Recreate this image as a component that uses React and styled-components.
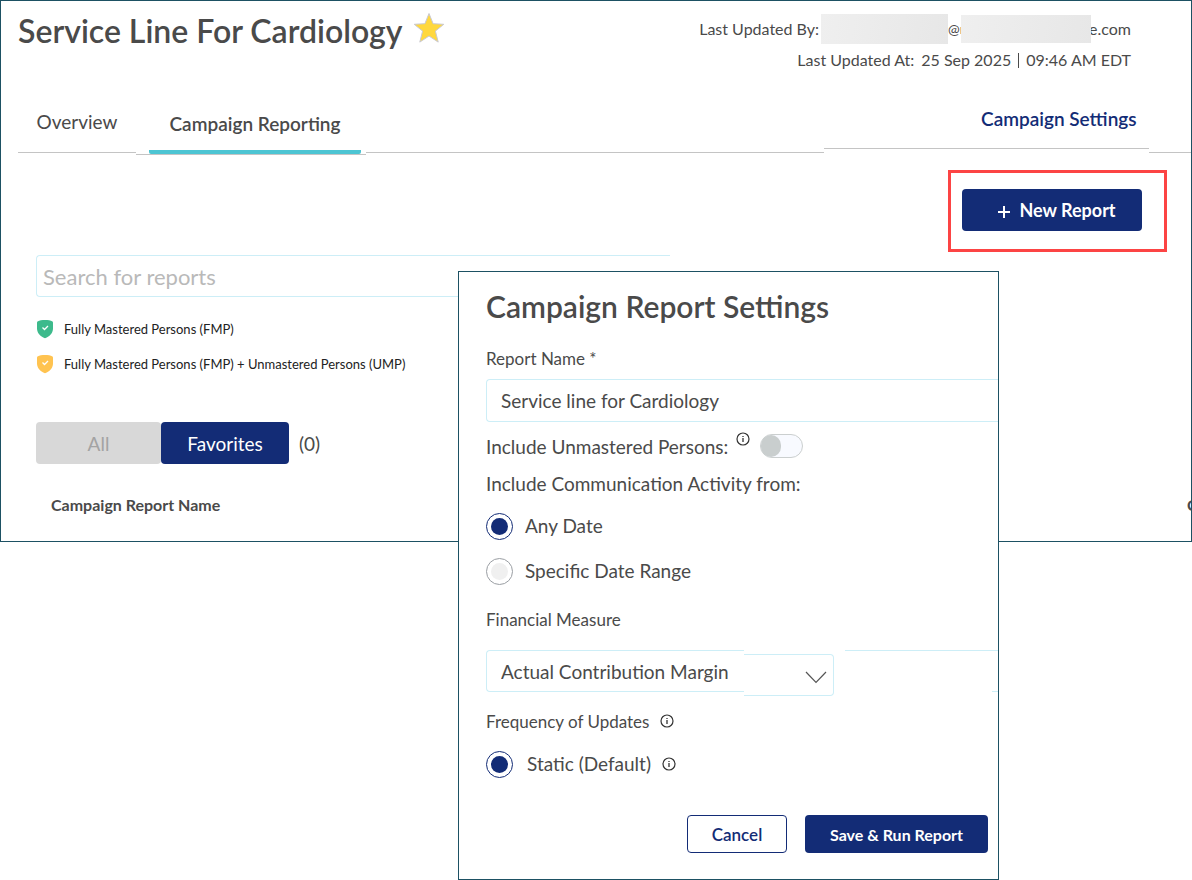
import { useState } from 'react'
import styled, { createGlobalStyle } from 'styled-components'

const navy = '#132c76'
const ink = '#4a4a4a'
const frame = '#1d5163'
const line = '#c4c4c4'
const field = '#cdeef7'

const GlobalStyle = createGlobalStyle`
  * {
    margin: 0;
    padding: 0;
    box-sizing: border-box;
  }

  body {
    background: #fff;
    color: ${ink};
    font-family: Lato, 'Liberation Sans', sans-serif;
    font-size: 16px;
  }

  button, input, select {
    font-family: inherit;
    color: inherit;
  }
`

const Page = styled.div`
  display: grid;
  grid-template-columns: minmax(0, 1fr);
  align-items: start;
`

const Panel = styled.main`
  grid-area: 1 / 1;
  border: 1px solid ${frame};
  padding-bottom: 22px;
  overflow: hidden;
`

const Header = styled.header`
  display: flex;
  justify-content: space-between;
  padding: 10px 60px 0 17px;
  height: 96px;
`

const TitleRow = styled.div`
  display: flex;
  align-items: flex-start;
  gap: 9px;
`

const Title = styled.h1`
  font-size: 32px;
  line-height: 40px;
  font-weight: 600;
`

const Meta = styled.div`
  display: flex;
  flex-direction: column;
  align-items: flex-end;
  gap: 1px;
  padding-top: 3px;
`

const MetaRow = styled.div`
  display: flex;
  align-items: center;
  height: 30px;
  gap: ${(p) => p.$gap || 0}px;
  line-height: 18px;
  white-space: nowrap;
`

const Redacted = styled.span`
  width: ${(p) => p.$w}px;
  height: ${(p) => p.$h}px;
  margin-left: ${(p) => p.$left || 0}px;
  background: linear-gradient(100deg, #efefef, #e7e7e7);
`

const Clip = styled.span`
  display: flex;
  width: ${(p) => p.$w}px;
  justify-content: ${(p) => (p.$end ? 'flex-end' : 'flex-start')};
  overflow: hidden;
`

const At = styled(Clip)`
  font-size: 14px;
`

const Divider = styled.span`
  width: 1px;
  height: 15px;
  background: ${ink};
`

const Tabs = styled.nav`
  display: flex;
  align-items: flex-start;
  padding-left: 17px;
`

const Tab = styled.a`
  display: flex;
  align-items: center;
  justify-content: center;
  width: ${(p) => p.$w}px;
  height: ${(p) => p.$h}px;
  padding-bottom: 6px;
  border-bottom: 1px solid ${line};
  color: ${(p) => p.$color || ink};
  font-size: 19px;
  font-weight: ${(p) => (p.$strong ? 600 : 400)};
  text-decoration: none;
  white-space: nowrap;
`

const ActiveTab = styled(Tab)`
  padding: 0 5px 0 13px;

  span {
    display: flex;
    align-items: center;
    justify-content: center;
    width: 100%;
    height: 100%;
    border-bottom: 4px solid #4dc5d3;
    border-radius: 0 0 2px 2px;
  }
`

const SettingsTab = styled(Tab)`
  justify-content: flex-end;
  padding: 0 12px 8px 0;

  span {
    width: 156px;
    overflow: hidden;
  }
`

const TabLine = styled.div`
  flex: ${(p) => (p.$w ? `0 0 ${p.$w}px` : '1')};
  height: 56px;
  border-bottom: 1px solid ${line};
`

const Actions = styled.div`
  display: flex;
  justify-content: flex-end;
  padding: 15px 24px 0 0;
`

const Highlight = styled.div`
  border: 3px solid #fc4444;
  padding: 16px 22px 18px 11px;
`

const Button = styled.button`
  display: flex;
  align-items: center;
  justify-content: center;
  gap: 8px;
  width: ${(p) => p.$w}px;
  height: ${(p) => p.$h || 42}px;
  border: 1px solid ${(p) => (p.$outline ? navy : 'transparent')};
  border-radius: 4px;
  background: ${(p) => (p.$outline ? '#fff' : navy)};
  background-origin: border-box;
  color: ${(p) => (p.$outline ? navy : '#fff')};
  font-size: ${(p) => p.$size || 19}px;
  font-weight: ${(p) => p.$weight || 600};
  white-space: nowrap;
`

const NewButton = styled(Button)`
  padding-left: 9px;

  svg {
    margin-top: 3px;
  }
`

const Search = styled.input`
  display: block;
  width: 634px;
  max-width: 100%;
  height: 42px;
  margin: 3px 0 0 35px;
  padding: 0 6px;
  border: 1px solid ${field};
  border-right: 0;
  border-radius: 4px 0 0 4px;
  font-size: 22px;

  &::placeholder {
    color: #b9b9b9;
    opacity: 1;
  }
`

const Legend = styled.ul`
  display: flex;
  flex-direction: column;
  gap: 15px;
  padding: 22px 0 0 35px;
  list-style: none;

  li {
    display: flex;
    align-items: center;
    gap: 10px;
    height: 20px;
    color: #222;
    font-size: 13px;
  }
`

const Filters = styled.div`
  display: flex;
  align-items: center;
  padding: 48px 0 0 35px;
  font-size: 19px;
`

const FilterButton = styled(Button)`
  background: ${(p) => (p.$on ? navy : '#d8d8d8')};
  color: ${(p) => (p.$on ? '#fff' : '#a3a3a3')};
  font-weight: 400;
`

const Count = styled.span`
  margin-left: 10px;
`

const Reports = styled.table`
  width: 100%;
  margin-top: 25px;
  border-collapse: collapse;
  table-layout: fixed;

  th {
    height: 30px;
    padding-left: 50px;
    font-size: 16px;
    font-weight: 700;
    text-align: left;
    white-space: nowrap;
  }

  th:last-child {
    width: 4px;
    padding: 0;
    overflow: hidden;
  }
`

const Dialog = styled.form`
  grid-area: 1 / 1;
  z-index: 1;
  width: 541px;
  margin: 271px 0 0 458px;
  padding: 15px 0 26px 27px;
  border: 1px solid ${frame};
  background: #fff;
`

const DialogTitle = styled.h2`
  font-size: 30px;
  line-height: 38px;
  font-weight: 600;
`

const Label = styled.label`
  display: flex;
  align-items: center;
  gap: 11px;
  height: 20px;
  margin-top: ${(p) => p.$top}px;
  font-size: 17px;
`

const TextInput = styled.input`
  display: block;
  width: 100%;
  height: 43px;
  margin-top: 11px;
  padding: 0 14px;
  border: 1px solid ${field};
  border-right: 0;
  border-radius: 4px 0 0 4px;
  font-size: 19px;
`

const Line = styled.div`
  display: flex;
  align-items: center;
  height: 26px;
  margin-top: 11px;
  font-size: 19px;

  svg {
    margin: 0 10px 14px 8px;
  }
`

const Toggle = styled.input`
  appearance: none;
  width: 43px;
  height: 24px;
  border: 1px solid #cbcfcf;
  border-radius: 12px;
  background: #f8faff;

  &::before {
    content: '';
    display: block;
    width: 20px;
    height: 22px;
    border-radius: 11px;
    background: #c9cece;
  }

  &:checked::before {
    margin-left: auto;
    background: ${navy};
  }
`

const Option = styled.div`
  display: flex;
  align-items: center;
  gap: 11px;
  height: 28px;
  margin-top: ${(p) => p.$top}px;
  font-size: 19px;

  label {
    display: flex;
    align-items: center;
    gap: ${(p) => p.$gap || 12}px;
    line-height: 26px;
  }
`

const Radio = styled.input`
  appearance: none;
  flex: none;
  display: grid;
  place-items: center;
  width: 27px;
  height: 27px;
  border: 1px solid #9a9ea3;
  border-radius: 50%;

  &::before {
    content: '';
    width: 17px;
    height: 17px;
    border-radius: 50%;
    background: #f0f0f0;
  }

  &:checked {
    border-color: ${navy};
  }

  &:checked::before {
    background: ${navy};
  }
`

const SelectRow = styled.div`
  display: flex;
  align-items: flex-start;
  height: 46px;
  margin-top: 21px;
`

const Select = styled.select`
  appearance: none;
  width: 258px;
  height: 42px;
  padding: 0 14px;
  border: 1px solid ${field};
  border-right: 0;
  border-radius: 4px 0 0 4px;
  background: #fff;
  font-size: 19px;
`

const SelectEnd = styled.span`
  display: flex;
  align-items: center;
  justify-content: flex-end;
  width: 90px;
  height: 42px;
  margin-top: 4px;
  padding: 4px 6px 0 0;
  border: 1px solid ${field};
  border-left: 0;
  border-radius: 0 4px 4px 0;
`

const NextField = styled.span`
  display: flex;
  justify-content: flex-end;
  flex: 1;
  height: 42px;
  margin-left: 11px;
  border-top: 1px solid ${field};

  &::after {
    content: '';
    width: 6px;
    border-bottom: 1px solid ${field};
  }
`

const Footer = styled.div`
  display: flex;
  justify-content: flex-end;
  gap: 18px;
  margin-top: 37px;
  padding-right: 10px;
`

const Star = () => (
  <svg width="34" height="34" viewBox="0 0 34 34" aria-label="Favorite">
    <path
      d="M17 2.5 21.1 12.7 31.8 13.3 23.4 20.1 26.2 31.1 17 25 7.8 31.1 10.6 20.1 2.2 13.3 12.900 12.7z"
      fill="#ffd83e"
      stroke="#c9c9d2"
      strokeWidth="1"
      strokeLinejoin="round"
    />
  </svg>
)

const Shield = ({ color }) => (
  <svg width="18" height="20" viewBox="0 0 18 20" aria-hidden="true">
    <path d="M9 1C12 1 14.500 1.500 16.500 2.400Q17 2.700 17 3.300V9.500C17 13.700 14 17.500 9 19.300C4 17.500 1 13.700 1 9.500V3.300Q1 2.700 1.500 2.400C3.500 1.500 6 1 9 1z" fill={color} />
    <path d="M6.500 8.500 8.500 10.500 12 7" fill="none" stroke="#fff" strokeWidth="1.3" />
  </svg>
)

const Plus = () => (
  <svg width="14" height="14" viewBox="0 0 14 14" aria-hidden="true">
    <path d="M7 1v12M1 7h12" stroke="#fff" strokeWidth="2" />
  </svg>
)

const Info = () => (
  <svg width="14" height="14" viewBox="0 0 14 14" aria-hidden="true">
    <circle cx="7" cy="7" r="6" fill="none" stroke="#333" strokeWidth="1.2" />
    <path d="M7 6v4M7 4v1" stroke="#333" strokeWidth="1.3" />
  </svg>
)

const Chevron = () => (
  <svg width="22" height="13" viewBox="0 0 22 13" aria-hidden="true">
    <path d="M1 1 11 11.5 21 1" fill="none" stroke="#555" strokeWidth="1.2" />
  </svg>
)

export default function App() {
  const [range, setRange] = useState('any')
  const [filter, setFilter] = useState('favorites')

  return (
    <Page>
      <GlobalStyle />
      <Panel>
        <Header>
          <TitleRow>
            <Title>Service Line For Cardiology</Title>
            <Star />
          </TitleRow>
          <Meta>
            <MetaRow>
              Last Updated By:
              <Redacted $w={127} $h={30} $left={2} />
              <At $w={13}>@r</At>
              <Redacted $w={130} $h={28} />
              <Clip $w={40} $end>e.com</Clip>
            </MetaRow>
            <MetaRow $gap={7}>
              <span>Last Updated At:</span>
              <span>25 Sep 2025</span>
              <Divider />
              <span>09:46 AM EDT</span>
            </MetaRow>
          </Meta>
        </Header>

        <Tabs>
          <Tab href="#overview" $w={118} $h={56}>Overview</Tab>
          <ActiveTab href="#reporting" $w={230} $h={58} $strong>
            <span>Campaign Reporting</span>
          </ActiveTab>
          <TabLine />
          <SettingsTab href="#settings" $w={325} $h={52} $strong $color={navy}>
            <span>Campaign Settings</span>
          </SettingsTab>
          <TabLine $w={42} />
        </Tabs>

        <Actions>
          <Highlight>
            <NewButton type="button" $w={180} $size={18} $weight={700}>
              <Plus />
              New Report
            </NewButton>
          </Highlight>
        </Actions>

        <Search type="search" placeholder="Search for reports" aria-label="Search for reports" />

        <Legend>
          <li>
            <Shield color="#3dba8c" />
            Fully Mastered Persons (FMP)
          </li>
          <li>
            <Shield color="#ffc350" />
            Fully Mastered Persons (FMP) + Unmastered Persons (UMP)
          </li>
        </Legend>

        <Filters>
          <FilterButton type="button" $w={125} $on={filter === 'all'} onClick={() => setFilter('all')}>
            All
          </FilterButton>
          <FilterButton type="button" $w={128} $on={filter === 'favorites'} onClick={() => setFilter('favorites')}>
            Favorites
          </FilterButton>
          <Count>(0)</Count>
        </Filters>

        <Reports>
          <thead>
            <tr>
              <th>Campaign Report Name</th>
              <th>C</th>
            </tr>
          </thead>
        </Reports>
      </Panel>

      <Dialog onSubmit={(e) => e.preventDefault()}>
        <DialogTitle>Campaign Report Settings</DialogTitle>

        <Label htmlFor="name" $top={23}>Report Name *</Label>
        <TextInput id="name" type="text" defaultValue="Service line for Cardiology" />

        <Line>
          <label htmlFor="unmastered">Include Unmastered Persons:</label>
          <Info />
          <Toggle id="unmastered" type="checkbox" />
        </Line>

        <Line>Include Communication Activity from:</Line>
        <Option $top={16}>
          <label>
            <Radio type="radio" name="range" checked={range === 'any'} onChange={() => setRange('any')} />
            Any Date
          </label>
        </Option>
        <Option $top={17}>
          <label>
            <Radio type="radio" name="range" checked={range === 'specific'} onChange={() => setRange('specific')} />
            Specific Date Range
          </label>
        </Option>

        <Label htmlFor="measure" $top={24}>Financial Measure</Label>
        <SelectRow>
          <Select id="measure">
            <option>Actual Contribution Margin</option>
          </Select>
          <SelectEnd>
            <Chevron />
          </SelectEnd>
          <NextField />
        </SelectRow>

        <Label as="div" $top={15}>
          Frequency of Updates
          <Info />
        </Label>
        <Option $top={19} $gap={14}>
          <label>
            <Radio type="radio" name="frequency" defaultChecked />
            Static (Default)
          </label>
          <Info />
        </Option>

        <Footer>
          <Button type="button" $w={100} $h={38} $size={17} $outline>Cancel</Button>
          <Button type="submit" $w={183} $h={38} $size={16} $weight={700}>Save &amp; Run Report</Button>
        </Footer>
      </Dialog>
    </Page>
  )
}
